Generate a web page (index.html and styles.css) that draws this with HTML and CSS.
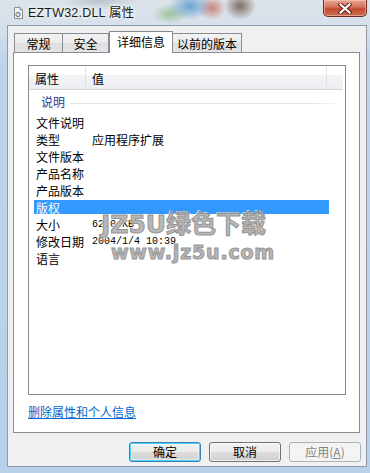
FILE: index.html
```html
<!DOCTYPE html>
<html>
<head>
<meta charset="utf-8">
<link rel="stylesheet" href="styles.css">
</head>
<body>
<div class="window">
  <div class="titlebar">
    <svg class="appicon" width="11" height="12" viewBox="0 0 11 12">
      <path d="M1.5 0.5h5.5l2.5 2.5v8.5h-8z" fill="#f4f4f4" stroke="#8a8f96"/>
      <path d="M7 0.5v2.5h2.5" fill="none" stroke="#8a8f96"/>
      <circle cx="5" cy="7.5" r="2.2" fill="#c9ced4" stroke="#6f757c"/>
      <circle cx="5" cy="7.5" r="0.8" fill="#fff"/>
    </svg>
    <span class="title">EZTW32.DLL 属性</span>
    <div class="close">
      <svg width="14" height="11" viewBox="0 0 14 11">
        <path d="M2.5 1.5l9 8M11.5 1.5l-9 8" stroke="#5a1a12" stroke-width="4" stroke-linecap="square"/>
        <path d="M2.5 1.5l9 8M11.5 1.5l-9 8" stroke="#ffffff" stroke-width="2.2" stroke-linecap="square"/>
      </svg>
    </div>
  </div>
  <div class="client">
    <div class="tabs">
      <div class="tab t1">常规</div>
      <div class="tab t2">安全</div>
      <div class="tab sel">详细信息</div>
      <div class="tab t4">以前的版本</div>
    </div>
    <div class="panel">
      <div class="list">
        <div class="header">
          <div class="hc h1">属性</div>
          <div class="hc h2">值</div>
          <div class="hc h3"></div>
        </div>
        <div class="group"><span>说明</span><i></i></div>
        <div class="row"><span class="k">文件说明</span><span class="v"></span></div>
        <div class="row"><span class="k">类型</span><span class="v">应用程序扩展</span></div>
        <div class="row"><span class="k">文件版本</span><span class="v"></span></div>
        <div class="row"><span class="k">产品名称</span><span class="v"></span></div>
        <div class="row"><span class="k">产品版本</span><span class="v"></span></div>
        <div class="row sel"><span class="k">版权</span><span class="v"></span></div>
        <div class="row"><span class="k">大小</span><span class="v mono">62.0 KB</span></div>
        <div class="row"><span class="k">修改日期</span><span class="v mono">2004/1/4 10:39</span></div>
        <div class="row"><span class="k">语言</span><span class="v"></span></div>
      </div>
      <div class="linkrow"><a class="link">删除属性和个人信息</a></div>
    </div>
    <div class="buttons">
      <div class="btn default">确定</div>
      <div class="btn">取消</div>
      <div class="btn disabled">应用(<u>A</u>)</div>
    </div>
  </div>
  <div class="watermark">
    <div class="wm1">JZ5U绿色下载</div>
    <div class="wm2">www.jz5u.com</div>
  </div>
</div>
</body>
</html>
```
FILE: styles.css
```css
html, body {
  margin: 0;
  padding: 0;
  width: 370px;
  height: 473px;
  overflow: hidden;
}
body {
  font-family: "Noto Sans CJK SC", "Liberation Sans", sans-serif;
  font-size: 12px;
  color: #000;
}
.window {
  position: relative;
  width: 370px;
  height: 473px;
  box-sizing: border-box;
  background:
    radial-gradient(ellipse 22px 14px at 190px 6px, rgba(70,140,200,0.75), transparent),
    radial-gradient(ellipse 14px 12px at 212px 8px, rgba(190,70,50,0.6), transparent),
    radial-gradient(ellipse 16px 14px at 240px 6px, rgba(90,60,40,0.7), transparent),
    radial-gradient(ellipse 18px 10px at 170px 14px, rgba(110,170,90,0.55), transparent),
    radial-gradient(ellipse 40px 10px at 100px 0px, rgba(150,160,170,0.5), transparent),
    linear-gradient(#dde3ea, #d5e0ec 30px, #bed4eb 60px, #b8d0ea);
  padding-bottom: 6px;
}
.titlebar {
  height: 25px;
  display: flex;
  align-items: flex-start;
}
.appicon {
  margin: 7px 0 0 13px;
}
.title {
  margin: 5px 0 0 4px;
  font-family: "Liberation Sans", "Noto Sans CJK SC", sans-serif;
  font-size: 12.5px;
  line-height: 16px;
  letter-spacing: 0.2px;
  color: #1b1b1b;
  text-shadow: 0 0 6px #fff, 0 0 4px #fff;
}
.close {
  margin-left: auto;
  margin-right: 3px;
  width: 44px;
  height: 17px;
  box-sizing: border-box;
  border: 1px solid #6e2c22;
  border-top: none;
  border-radius: 0 0 5px 5px;
  background: linear-gradient(#e9a593, #d3705c 45%, #c14b33 55%, #cf6d4e);
  box-shadow: inset 0 0 0 1px rgba(255,210,200,0.5);
  display: flex;
  align-items: center;
  justify-content: center;
}
.client {
  margin-left: 7px;
  width: 360px;
  height: 442px;
  box-sizing: border-box;
  border: 1px solid #8e9aa8;
  background: #f0f0f0;
  display: flex;
  flex-direction: column;
}
.tabs {
  height: 26px;
  display: flex;
  align-items: flex-end;
  padding-left: 6px;
}
.tab {
  height: 19px;
  box-sizing: border-box;
  border: 1px solid #898c95;
  border-bottom: none;
  background: linear-gradient(#f3f3f3, #ebebeb 50%, #dedede 51%, #e4e4e4);
  display: flex;
  align-items: center;
  justify-content: center;
  line-height: 16px;
  padding-top: 1px;
}
.t1 { width: 49px; }
.t2 { width: 46px; border-left: none; }
.tab.sel {
  width: 64px;
  height: 22px;
  margin-bottom: -1px;
  background: #fff;
  position: relative;
  z-index: 1;
  padding-top: 0;
  padding-bottom: 2px;
}
.t4 { width: 69px; border-left: none; }
.panel {
  margin-left: 5px;
  width: 347px;
  height: 381px;
  box-sizing: border-box;
  border: 1px solid #898c95;
  background: #fff;
  display: flex;
  flex-direction: column;
}
.list {
  margin: 12px 0 0 14px;
  width: 318px;
  height: 330px;
  box-sizing: border-box;
  border: 1px solid #828790;
  background: #fff;
  position: relative;
}
.header {
  height: 24px;
  width: 314px;
  display: flex;
  box-sizing: border-box;
  border-bottom: 1px solid #d5d5d5;
  background: linear-gradient(#fff 0, #fff 9px, #f3f4f6 9px, #eceef1);
}
.hc {
  box-sizing: border-box;
  padding-left: 6px;
  line-height: 25px;
  border-right: 1px solid #e0e2e6;
  height: 23px;
}
.h1 { width: 57px; }
.h2 { width: 241px; }
.h3 { flex: 1; border-right: none; }
.group {
  height: 24px;
  display: flex;
  align-items: center;
  padding: 0 10px 0 12px;
  color: #1e3a92;
}
.group span {
  line-height: 16px;
}
.group i {
  flex: 1;
  height: 1px;
  margin-left: 5px;
  margin-top: 2px;
  background: linear-gradient(90deg, #e2e5ee, #dfe2ea 90%, #f4f5f8);
}
.row {
  height: 17px;
  display: flex;
  align-items: center;
  padding-left: 7px;
  line-height: 17px;
}
.row .k { width: 56px; flex: none; }
.row .v { flex: 1; }
.mono {
  font-family: "Liberation Mono", monospace;
  font-size: 10px;
}
.row.sel {
  margin-left: 5px;
  width: 293px;
  padding-left: 2px;
  color: #fff;
  background: linear-gradient(transparent 1px, #3399ff 1px, #3399ff 15px, transparent 15px);
}
.linkrow {
  margin: 8px 0 0 14px;
  line-height: 18px;
}
.link {
  color: #0066cc;
  text-decoration: underline;
}
.buttons {
  display: flex;
  justify-content: flex-end;
  gap: 8px;
  margin-top: 9px;
  padding-right: 5px;
}
.btn {
  width: 72px;
  height: 20px;
  box-sizing: border-box;
  border: 1px solid #707070;
  border-radius: 3px;
  background: linear-gradient(#f2f2f2, #ebebeb 50%, #dddddd 51%, #cfcfcf);
  box-shadow: inset 0 0 0 1px rgba(255,255,255,0.7);
  display: flex;
  align-items: center;
  justify-content: center;
  line-height: 16px;
}
.btn.default {
  border-color: #3c7fb1;
  box-shadow: inset 0 0 0 1px #48d3fb, inset 0 0 0 2px rgba(255,255,255,0.5);
}
.btn.disabled {
  border-color: #adb2b5;
  background: #f4f4f4;
  box-shadow: none;
  color: #838383;
}
.btn u { text-decoration: underline; }
.watermark {
  position: absolute;
  left: 101px;
  top: 210px;
  font-family: "DejaVu Sans", "Noto Sans CJK SC", sans-serif;
  font-weight: bold;
  color: #b0b0b0;
  -webkit-text-stroke: 1px #8a8a8a;
  text-shadow: 1px 1px 0 #fff, -1px -1px 0 #fff;
  pointer-events: none;
  opacity: 0.9;
}
.wm1 {
  font-size: 25px;
  line-height: 29px;
}
.wm2 {
  font-size: 19px;
  line-height: 20px;
  margin-top: 3px;
  margin-left: 10px;
  letter-spacing: 0.8px;
}
```
